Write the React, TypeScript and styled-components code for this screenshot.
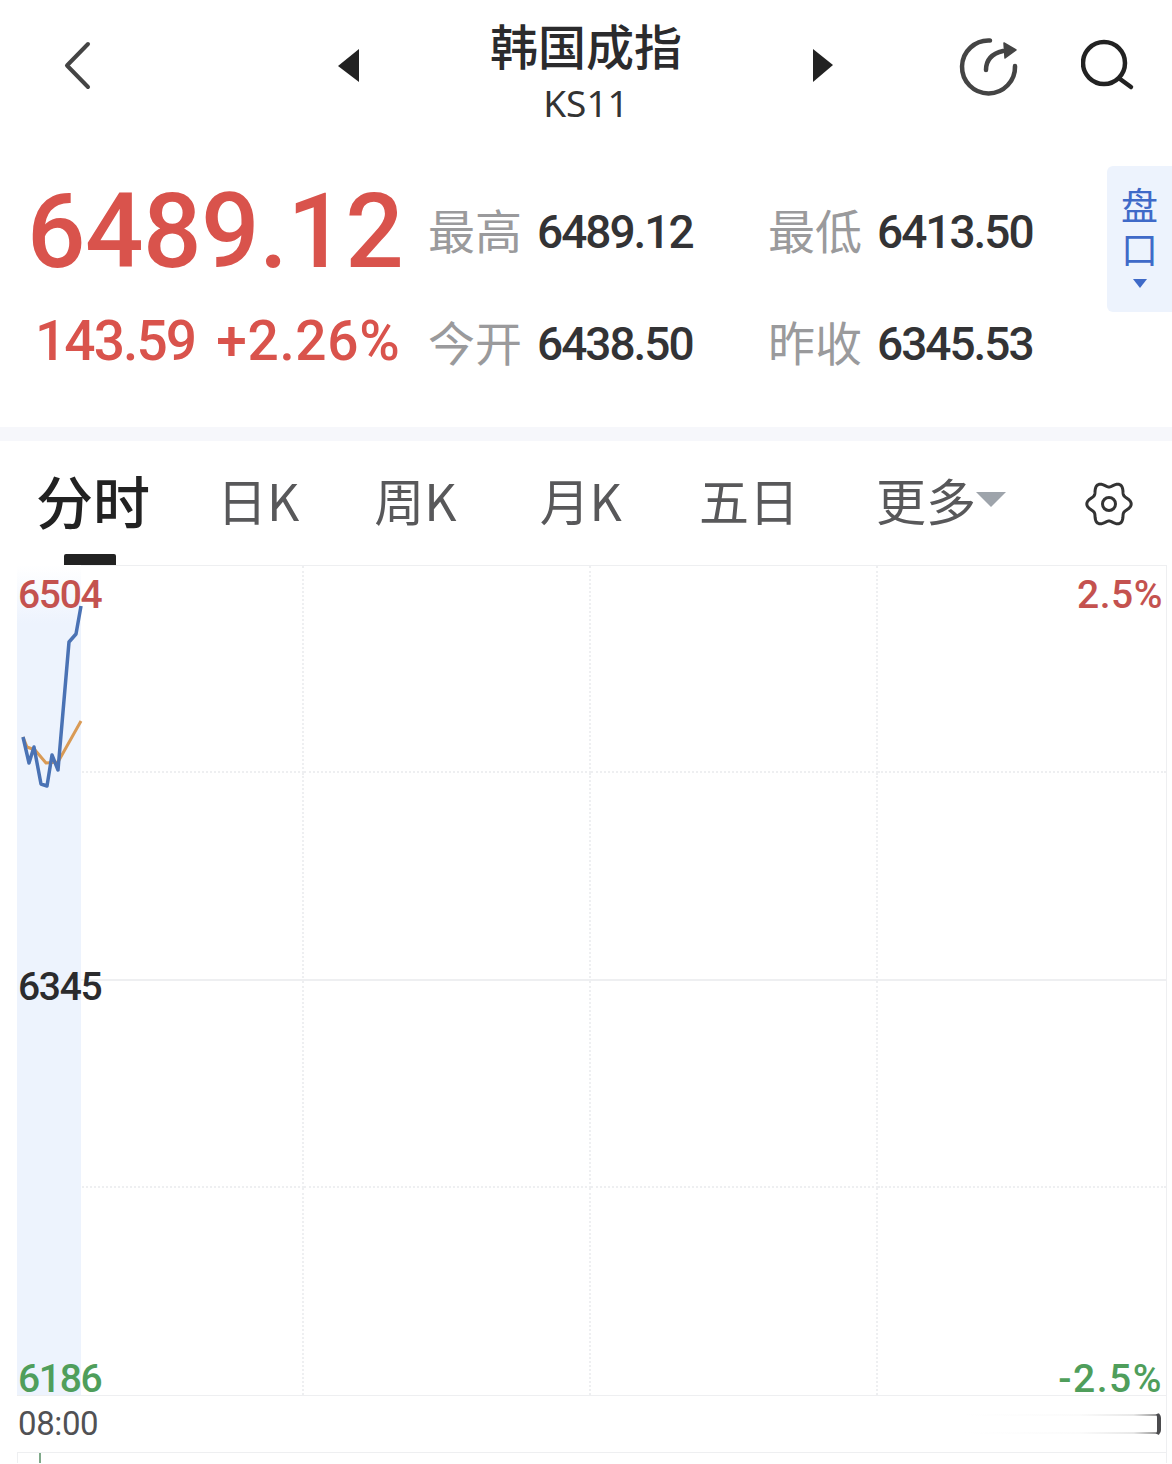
import { FunctionComponent } from "react";
import styled, { createGlobalStyle } from "styled-components";

const CJK = `"Noto Sans CJK SC", "Noto Sans", sans-serif`;
const NUM = `Roboto, "Noto Sans CJK SC", sans-serif`;

const colors = {
  red: "#d9534c",
  axisRed: "#c4524f",
  green: "#4f9e5b",
  ink: "#2b2b2d",
  label: "#9a9a9c",
  tab: "#58585a",
  line: "#eeeff1",
  band: "#edf3fd",
  blue: "#3f6ac8",
};

const GlobalStyle = createGlobalStyle`
  html, body { margin: 0; padding: 0; background: #fff; }
  body { font-family: ${CJK}; }
`;

const Page = styled.div`
  width: 1172px;
  height: 1464px;
  overflow: hidden;
  background: #fff;
`;

const Header = styled.header`
  height: 130px;
  display: flex;
  align-items: flex-start;
  color: ${colors.ink};
`;

const BackButton = styled.svg`
  margin: 41px 0 0 64px;
  flex: none;
`;

const Arrow = styled.svg<{ $gap: number }>`
  margin: 49px 0 0 ${({ $gap }) => $gap}px;
  flex: none;
`;

const TitleBlock = styled.div`
  width: 380px;
  margin-left: 37px;
  margin-right: -37px;
  flex: none;
  text-align: center;
`;

const Title = styled.h1`
  margin: 13px 0 0;
  font-size: 48px;
  line-height: 62px;
  font-weight: 500;
  letter-spacing: 0;
`;

const Code = styled.div`
  font-family: "Noto Sans", sans-serif;
  font-size: 37px;
  line-height: 46px;
  margin-top: 5px;
  color: #333;
`;

const RefreshIcon = styled.svg`
  margin: 36px 0 0 125px;
  flex: none;
`;

const SearchIcon = styled.svg`
  margin: 38px 0 0 62px;
  flex: none;
`;

const Quote = styled.section`
  height: 261px;
  padding-top: 36px;
  display: flex;
  align-items: flex-start;
`;

const QuoteGrid = styled.div`
  margin-top: 10px;
  width: 1107px;
  flex: none;
  display: grid;
  grid-template-columns: 428px 340px 339px;
  grid-template-rows: 112px 112px;
  align-items: center;
`;

const Price = styled.div`
  margin-left: 27px;
  font-family: ${NUM};
  font-size: 103px;
  line-height: 112px;
  font-weight: 500;
  letter-spacing: -0.5px;
  color: ${colors.red};
  white-space: nowrap;
`;

const Change = styled.div`
  margin-left: 35px;
  padding-bottom: 5px;
  font-family: ${NUM};
  font-size: 55px;
  line-height: 107px;
  font-weight: 500;
  color: ${colors.red};
  display: flex;
  gap: 21px;
  white-space: nowrap;
`;

const ChangeValue = styled.span<{ $spacing: number }>`
  letter-spacing: ${({ $spacing }) => $spacing}px;
`;

const Stat = styled.div`
  display: flex;
  align-items: center;
  gap: 15px;
`;

const StatLabel = styled.span`
  font-size: 47px;
  line-height: 60px;
  padding-bottom: 7px;
  color: ${colors.label};
`;

const StatValue = styled.span`
  font-family: ${NUM};
  font-size: 46px;
  line-height: 60px;
  letter-spacing: -2px;
  font-weight: 500;
  color: #333335;
`;

const SideTab = styled.div`
  width: 65px;
  height: 146px;
  flex: none;
  box-sizing: border-box;
  padding-top: 21px;
  background: ${colors.band};
  border-radius: 6px 0 0 6px;
  color: ${colors.blue};
  display: flex;
  flex-direction: column;
  align-items: center;
`;

const SideLabel = styled.span`
  writing-mode: vertical-rl;
  text-orientation: upright;
  font-size: 37px;
  line-height: 44px;
  letter-spacing: 7px;
`;

const SideCaret = styled.span`
  margin-top: 4px;
  border-style: solid;
  border-width: 9px 7px 0;
  border-color: ${colors.blue} transparent transparent;
`;

const Divider = styled.div`
  height: 14px;
  background: #f6f7fb;
`;

const Tabs = styled.nav`
  height: 124px;
  display: flex;
  align-items: flex-start;
  position: relative;
  box-sizing: border-box;
  padding: 24px 0 0 36px;
`;

const Tab = styled.div<{ $active?: boolean; $gap?: number }>`
  margin-left: ${({ $gap = 0 }) => $gap}px;
  font-family: ${CJK};
  font-size: ${({ $active }) => ($active ? 57 : 50)}px;
  line-height: 68px;
  font-weight: ${({ $active }) => ($active ? 500 : 400)};
  color: ${({ $active }) => ($active ? "#222" : colors.tab)};
  display: flex;
  align-items: center;
`;

const TabCaret = styled.span`
  border-style: solid;
  border-width: 15px 15px 0;
  border-color: #9ea4ab transparent transparent;
`;

const TabMark = styled.span`
  position: absolute;
  left: 64px;
  bottom: 0;
  width: 52px;
  height: 11px;
  border-radius: 2px 2px 0 0;
  background: #222;
`;

const GearIcon = styled.svg`
  position: absolute;
  left: 1084px;
  top: 38px;
`;

const Chart = styled.div`
  position: relative;
  width: 1150px;
  height: 831px;
  margin-left: 17px;
  box-sizing: border-box;
  border: 1px solid ${colors.line};
  display: grid;
  grid-template-columns: 286px 287px 287px 288px;
  grid-template-rows: repeat(4, 1fr);
`;

const Cell = styled.div<{ $col: number; $row: number }>`
  border-right: ${({ $col }) => ($col < 3 ? `2px dotted ${colors.line}` : "none")};
  border-bottom: ${({ $row }) =>
    $row === 1 ? `2px solid ${colors.line}` : $row === 3 ? "none" : `2px dotted ${colors.line}`};
`;

const Plot = styled.svg`
  position: absolute;
  left: -1px;
  top: -1px;
`;

const AxisLabel = styled.span<{ $color: string; $side: "left" | "right"; $top: number; $spacing?: number }>`
  position: absolute;
  ${({ $side }) => ($side === "left" ? "left: 0;" : "right: 3px;")}
  top: ${({ $top }) => $top}px;
  font-family: ${NUM};
  font-size: 39px;
  line-height: 46px;
  font-weight: 500;
  letter-spacing: ${({ $spacing = -1.3 }) => $spacing}px;
  color: ${({ $color }) => $color};
`;

const TimeRow = styled.div`
  height: 57px;
  margin-left: 17px;
  width: 1150px;
  display: flex;
  align-items: center;
  justify-content: space-between;
  box-sizing: border-box;
  padding: 0 5px 0 1px;
  border-right: 1px solid ${colors.line};
  border-bottom: 1px solid ${colors.line};
`;

const TimeLabel = styled.span`
  font-family: ${NUM};
  font-size: 33px;
  line-height: 44px;
  letter-spacing: -0.4px;
  color: #515154;
`;

const Scroller = styled.div`
  width: 200px;
  height: 24px;
  box-sizing: border-box;
  border-radius: 0 6px 6px 0;
  border: 2px solid transparent;
  border-right: 4px solid #4b4b4e;
  background: linear-gradient(90deg, #fff 0%, #fbfbfb 60%, #e8e8e8 88%, #999 100%) top / 100% 2px no-repeat,
    linear-gradient(90deg, #fff 0%, #fbfbfb 60%, #e8e8e8 88%, #999 100%) bottom / 100% 2px no-repeat;
`;

const LowerPanel = styled.div`
  height: 10px;
  margin-left: 17px;
  width: 1150px;
  box-sizing: border-box;
  padding-left: 21px;
  border-left: 1px solid ${colors.line};
  border-right: 1px solid ${colors.line};
`;

const VolumeTick = styled.span`
  display: block;
  width: 2px;
  height: 10px;
  background: #7fa98a;
`;

const BLUE_LINE = "23,737 29,763 34,747 41,784 47,786 52,755 58,770 69,642 76,634 81,606";
const ORANGE_LINE = "23,737 27,747 35,750 46,763 58,762 81,721";

// six-lobed outline of the settings gear
const gearPath = () => {
  const points: string[] = [];
  for (let i = 0; i < 120; i++) {
    const t = (i / 120) * Math.PI * 2;
    const r = 19.6 + 2.6 * Math.cos(6 * t);
    points.push(`${(25 + r * Math.cos(t)).toFixed(2)} ${(25 + r * Math.sin(t)).toFixed(2)}`);
  }
  return `M${points.join("L")}Z`;
};

const plotPoints = (points: string) =>
  points
    .split(" ")
    .map((p) => {
      const [x, y] = p.split(",").map(Number);
      return `${x - 17},${y - 565}`;
    })
    .join(" ");

const stats = [
  { label: "最高", value: "6489.12" },
  { label: "最低", value: "6413.50" },
  { label: "今开", value: "6438.50" },
  { label: "昨收", value: "6345.53" },
];

const App: FunctionComponent = () => {
  const cells = [];
  for (let row = 0; row < 4; row++) {
    for (let col = 0; col < 4; col++) {
      cells.push(<Cell key={`${row}-${col}`} $row={row} $col={col} />);
    }
  }

  return (
    <Page>
      <GlobalStyle />
      <Header>
        <BackButton width="28" height="50" viewBox="0 0 28 50">
          <path d="M24 3 3 24.5 24 46" fill="none" stroke="#444" strokeWidth="4" strokeLinecap="round" strokeLinejoin="round" />
        </BackButton>
        <Arrow $gap={246} width="21" height="33" viewBox="0 0 21 33">
          <polygon points="21,0 0,17 21,33" fill="#222" />
        </Arrow>
        <TitleBlock>
          <Title>韩国成指</Title>
          <Code>KS11</Code>
        </TitleBlock>
        <Arrow $gap={74} width="21" height="33" viewBox="0 0 21 33">
          <polygon points="0,0 20,16 0,33" fill="#222" />
        </Arrow>
        <RefreshIcon width="60" height="60" viewBox="0 0 60 60" fill="none" stroke="#444" strokeLinecap="round">
          <path d="M31 4.5A26.5 26.5 0 1 0 56 30" strokeWidth="4.5" />
          <path d="M27 34C27 26 31 18 44 15" strokeWidth="4.5" />
          <polygon points="45,7 57,14 46,22" fill="#444" stroke="#444" strokeWidth="1.5" strokeLinejoin="round" />
        </RefreshIcon>
        <SearchIcon width="54" height="54" viewBox="0 0 54 54" fill="none" stroke="#222" strokeWidth="4.5" strokeLinecap="round">
          <circle cx="23" cy="25" r="21" />
          <path d="M39 41 50 49" />
        </SearchIcon>
      </Header>

      <Quote>
        <QuoteGrid>
          <Price>6489.12</Price>
          <Stat>
            <StatLabel>{stats[0].label}</StatLabel>
            <StatValue>{stats[0].value}</StatValue>
          </Stat>
          <Stat>
            <StatLabel>{stats[1].label}</StatLabel>
            <StatValue>{stats[1].value}</StatValue>
          </Stat>
          <Change>
            <ChangeValue $spacing={-1.9}>143.59</ChangeValue>
            <ChangeValue $spacing={0.7}>+2.26%</ChangeValue>
          </Change>
          <Stat>
            <StatLabel>{stats[2].label}</StatLabel>
            <StatValue>{stats[2].value}</StatValue>
          </Stat>
          <Stat>
            <StatLabel>{stats[3].label}</StatLabel>
            <StatValue>{stats[3].value}</StatValue>
          </Stat>
        </QuoteGrid>
        <SideTab>
          <SideLabel>盘口</SideLabel>
          <SideCaret />
        </SideTab>
      </Quote>

      <Divider />

      <Tabs>
        <Tab $active>分时</Tab>
        <Tab $gap={67}>日K</Tab>
        <Tab $gap={75}>周K</Tab>
        <Tab $gap={83}>月K</Tab>
        <Tab $gap={77}>五日</Tab>
        <Tab $gap={77}>
          更多
          <TabCaret />
        </Tab>
        <TabMark />
        <GearIcon width="50" height="50" viewBox="0 0 50 50" fill="none" stroke="#333" strokeWidth="3">
          <path d={gearPath()} strokeLinejoin="round" />
          <circle cx="25" cy="25" r="6.5" />
        </GearIcon>
      </Tabs>

      <Chart>
        {cells}
        <Plot width="1150" height="831" viewBox="0 0 1150 831" fill="none">
          <defs>
            <linearGradient id="band" x1="0" y1="0" x2="0" y2="1">
              <stop offset="0" stopColor="#fff" />
              <stop offset="0.07" stopColor={colors.band} />
              <stop offset="1" stopColor={colors.band} />
            </linearGradient>
          </defs>
          <rect x="0" y="0" width="64" height="830" fill="url(#band)" />
          <polyline points={plotPoints(ORANGE_LINE)} stroke="#d99a55" strokeWidth="3" strokeLinejoin="round" />
          <polyline points={plotPoints(BLUE_LINE)} stroke="#4a72b4" strokeWidth="3.5" strokeLinejoin="round" />
        </Plot>
        <AxisLabel $side="left" $top={6} $color={colors.axisRed}>6504</AxisLabel>
        <AxisLabel $side="right" $top={6} $color={colors.axisRed} $spacing={0.5}>2.5%</AxisLabel>
        <AxisLabel $side="left" $top={398} $color={colors.ink}>6345</AxisLabel>
        <AxisLabel $side="left" $top={790} $color={colors.green}>6186</AxisLabel>
        <AxisLabel $side="right" $top={790} $color={colors.green} $spacing={1.5}>-2.5%</AxisLabel>
      </Chart>

      <TimeRow>
        <TimeLabel>08:00</TimeLabel>
        <Scroller />
      </TimeRow>
      <LowerPanel>
        <VolumeTick />
      </LowerPanel>
    </Page>
  );
};

export default App;
